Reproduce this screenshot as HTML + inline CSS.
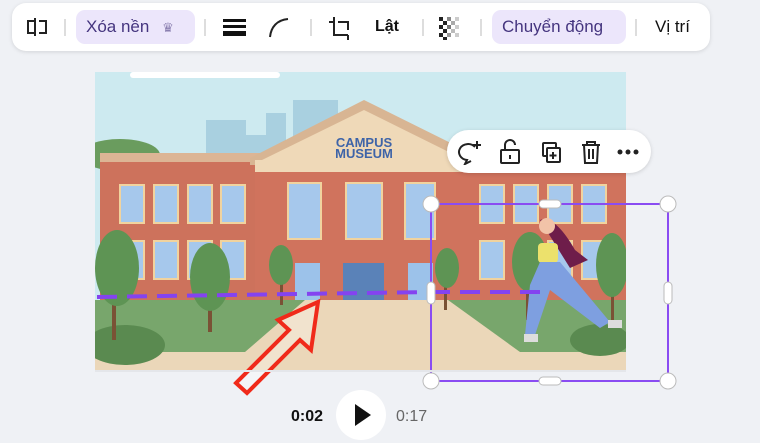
<!DOCTYPE html>
<html><head><meta charset="utf-8"><style>
body{margin:0;width:760px;height:443px;background:#eff1f5;font-family:"Liberation Sans","Noto Sans CJK SC",sans-serif;position:relative;overflow:hidden}
.tb{position:absolute;left:12px;top:3px;width:698px;height:48px;background:#fff;border-radius:14px;box-shadow:0 1px 4px rgba(0,0,0,.12)}
.t{position:absolute;top:0;height:48px;line-height:48px;font-size:17px;color:#111}
.pill{position:absolute;top:7px;height:34px;line-height:34px;background:#ece6fb;border-radius:9px;color:#45357f;font-size:17px;padding:0 10px}
.sep{position:absolute;top:16px;width:2px;height:17px;background:#ddd}
.fm{position:absolute;left:447px;top:130px;width:204px;height:43px;background:#fff;border-radius:22px;box-shadow:0 1px 4px rgba(0,0,0,.15)}
</style></head><body>
<div class="tb">
  <svg style="position:absolute;left:13px;top:14px" width="24" height="20" viewBox="0 0 24 20" fill="none" stroke="#222" stroke-width="2"><path d="M10 4H3v12h7M10 1v18M14 4h7v12h-7"/></svg>
  <div class="sep" style="left:52px"></div>
  <div class="pill" style="left:64px;width:99px">Xóa nền <span style="color:#8a7fb0;font-size:13px;margin-left:8px">♛</span></div>
  <div class="sep" style="left:192px"></div>
  <svg style="position:absolute;left:211px;top:14px" width="24" height="20"><rect x="0" y="2" width="23" height="3" fill="#111"/><rect x="0" y="8" width="23" height="3" fill="#111"/><rect x="0" y="14" width="23" height="5" fill="#111"/></svg>
  <svg style="position:absolute;left:256px;top:14px" width="22" height="22" fill="none" stroke="#222" stroke-width="2"><path d="M2 20C3 10 9 3 20 2"/></svg>
  <div class="sep" style="left:298px"></div>
  <svg style="position:absolute;left:316px;top:13px" width="26" height="26" fill="none" stroke="#222" stroke-width="2"><path d="M6 1v18h14M1 6h5M20 19v5M10 6h10v8"/></svg>
  <div class="t" style="left:363px;font-weight:bold;font-size:16px">Lật</div>
  <div class="sep" style="left:410px"></div>
  <svg style="position:absolute;left:427px;top:14px" width="26" height="24"><g fill="#222"><rect x="0" y="0" width="4" height="4"/><rect x="8" y="0" width="4" height="4" fill="#888"/><rect x="4" y="4" width="4" height="4"/><rect x="12" y="4" width="4" height="4" fill="#aaa"/><rect x="0" y="8" width="4" height="4"/><rect x="8" y="8" width="4" height="4" fill="#777"/><rect x="4" y="12" width="4" height="4"/><rect x="12" y="12" width="4" height="4" fill="#bbb"/><rect x="0" y="16" width="4" height="4"/><rect x="8" y="16" width="4" height="4" fill="#999"/><rect x="16" y="0" width="4" height="4" fill="#ccc"/><rect x="16" y="8" width="4" height="4" fill="#ccc"/><rect x="16" y="16" width="4" height="4" fill="#ccc"/><rect x="4" y="20" width="4" height="3"/></g></svg>
  <div class="sep" style="left:468px"></div>
  <div class="pill" style="left:480px;width:114px">Chuyển động</div>
  <div class="sep" style="left:623px"></div>
  <div class="t" style="left:643px">Vị trí</div>
</div>

<svg style="position:absolute;left:0;top:0" width="760" height="443">
  <defs><clipPath id="c"><rect x="95" y="72" width="531" height="298"/></clipPath></defs>
  <g clip-path="url(#c)">
  <rect x="95" y="72" width="531" height="298" fill="#cdeaf0"/>
  <rect x="130" y="72" width="150" height="6" rx="3" fill="#fff"/>
  <rect x="206" y="120" width="40" height="40" fill="#a9d0e0"/>
  <rect x="246" y="135" width="30" height="25" fill="#a9d0e0"/>
  <rect x="266" y="113" width="20" height="40" fill="#a9d0e0"/>
  <rect x="293" y="100" width="45" height="50" fill="#a9d0e0"/>
  <ellipse cx="120" cy="155" rx="40" ry="16" fill="#6a9c5e"/>
  <rect x="100" y="153" width="160" height="10" fill="#dcb595"/>
  <rect x="100" y="162" width="160" height="140" fill="#cd725c"/>
  <polygon points="250,158 364,100 475,155 475,165 250,165" fill="#d8b593"/>
  <polygon points="262,160 364,110 465,160" fill="#efd9b8"/>
  <rect x="255" y="170" width="371" height="130" fill="#d0735d"/>
  <rect x="255" y="160" width="371" height="12" fill="#efd9b8"/>
  <text x="364" y="147" font-size="13" font-weight="bold" fill="#3e64a8" text-anchor="middle">CAMPUS</text>
  <text x="364" y="158" font-size="13" font-weight="bold" fill="#3e64a8" text-anchor="middle">MUSEUM</text>
  <g fill="#a6c8ec" stroke="#f1d39e" stroke-width="2">
    <rect x="120" y="185" width="24" height="38"/><rect x="154" y="185" width="24" height="38"/><rect x="188" y="185" width="24" height="38"/><rect x="221" y="185" width="24" height="38"/>
    <rect x="120" y="241" width="24" height="38"/><rect x="154" y="241" width="24" height="38"/><rect x="188" y="241" width="24" height="38"/><rect x="221" y="241" width="24" height="38"/>
    <rect x="288" y="183" width="33" height="56"/><rect x="346" y="183" width="36" height="56"/><rect x="405" y="183" width="30" height="56"/>
    <rect x="480" y="185" width="24" height="38"/><rect x="514" y="185" width="24" height="38"/><rect x="548" y="185" width="24" height="38"/><rect x="582" y="185" width="24" height="38"/>
    <rect x="480" y="241" width="24" height="38"/><rect x="548" y="241" width="24" height="38"/><rect x="582" y="241" width="24" height="38"/>
  </g>
  <rect x="295" y="263" width="25" height="38" fill="#9cc2ea"/>
  <rect x="343" y="263" width="41" height="38" fill="#5a82b8"/>
  <rect x="408" y="263" width="25" height="38" fill="#9cc2ea"/>
  <rect x="95" y="300" width="531" height="70" fill="#ebd7b9"/>
  <polygon points="95,300 305,300 245,352 95,352" fill="#78a66c"/>
  <polygon points="448,300 626,300 626,352 520,352" fill="#78a66c"/>
  <ellipse cx="125" cy="345" rx="40" ry="20" fill="#5a8a50"/>
  <ellipse cx="600" cy="340" rx="30" ry="16" fill="#5a8a50"/>
  <g fill="#7a5235"><rect x="112" y="280" width="4" height="60"/><rect x="208" y="280" width="4" height="52"/><rect x="280" y="270" width="3" height="35"/><rect x="444" y="270" width="3" height="40"/><rect x="526" y="270" width="3" height="50"/><rect x="611" y="270" width="3" height="50"/></g>
  <g fill="#5e9454"><ellipse cx="117" cy="268" rx="22" ry="38"/><ellipse cx="210" cy="277" rx="20" ry="34"/><ellipse cx="281" cy="265" rx="12" ry="20"/><ellipse cx="447" cy="268" rx="12" ry="20"/><ellipse cx="530" cy="262" rx="18" ry="30"/><ellipse cx="612" cy="265" rx="16" ry="32"/></g>
  <path d="M540 220 Q555 215 575 250 L588 260 L570 268 Z" fill="#6e1d4a"/>
  <circle cx="547" cy="226" r="8" fill="#f2c3a8"/>
  <rect x="538" y="243" width="20" height="20" rx="4" fill="#ece16c"/>
  <path d="M540 262 L560 262 L610 322 L600 328 L550 290 L535 335 L525 335 L530 285 Z" fill="#7e9fe0"/>
  <rect x="524" y="334" width="14" height="8" fill="#ddd"/>
  <rect x="608" y="320" width="14" height="8" fill="#ddd"/>
  </g>
  <path d="M97 297 L430 292" stroke="#8443f0" stroke-width="4" stroke-dasharray="20 10"/>
  <path d="M430 292 L548 292" stroke="#8443f0" stroke-width="4" stroke-dasharray="20 10"/>
  <rect x="431" y="204" width="237" height="177" fill="none" stroke="#8a4cf2" stroke-width="2"/>
  <g fill="#fff" stroke="#bbb" stroke-width="1">
    <circle cx="431" cy="204" r="8"/><circle cx="668" cy="204" r="8"/><circle cx="431" cy="381" r="8"/><circle cx="668" cy="381" r="8"/>
    <rect x="539" y="200" width="22" height="8" rx="4"/><rect x="539" y="377" width="22" height="8" rx="4"/>
    <rect x="427" y="282" width="8" height="22" rx="4"/><rect x="664" y="282" width="8" height="22" rx="4"/>
  </g>
  <path d="M318 302 L311 350 L300 340 L247 393 L236 383 L289 330 L278 320 Z" fill="#fff" fill-opacity=".3" stroke="#f02a1a" stroke-width="4"/>
  <rect x="95" y="370" width="531" height="2" fill="#e4e6ea"/>
  <text x="291" y="421" font-size="16" font-weight="bold" fill="#111">0:02</text>
  <circle cx="361" cy="415" r="25" fill="#fff"/>
  <path d="M355 404 L371 415 L355 426 Z" fill="#111"/>
  <text x="396" y="421" font-size="16" fill="#666">0:17</text>
</svg>

<div class="fm">
  <svg style="position:absolute;left:10px;top:9px" width="190" height="26" fill="none" stroke="#222" stroke-width="2">
    <path d="M18 8A9 8 0 1 0 10 21l-2 4 6-3"/><path d="M20 2v8M16 6h8"/>
    <rect x="44" y="11" width="18" height="13" rx="1"/><path d="M48 11V6a5 5 0 0 1 10 0"/><path d="M53 16v4"/>
    <rect x="86" y="4" width="13" height="13" rx="1"/><rect x="90" y="9" width="13" height="14" rx="1" fill="#fff"/><path d="M96 13v7M92.5 16.5h7"/>
    <path d="M125 6h18M130 6V3h8v3M127 6l1 18h12l1-18M132 10v10M136 10v10"/>
  </svg>
  <svg style="position:absolute;left:170px;top:19px" width="24" height="6"><circle cx="3" cy="3" r="2.5" fill="#222"/><circle cx="11" cy="3" r="2.5" fill="#222"/><circle cx="19" cy="3" r="2.5" fill="#222"/></svg>
</div>
</body></html>
